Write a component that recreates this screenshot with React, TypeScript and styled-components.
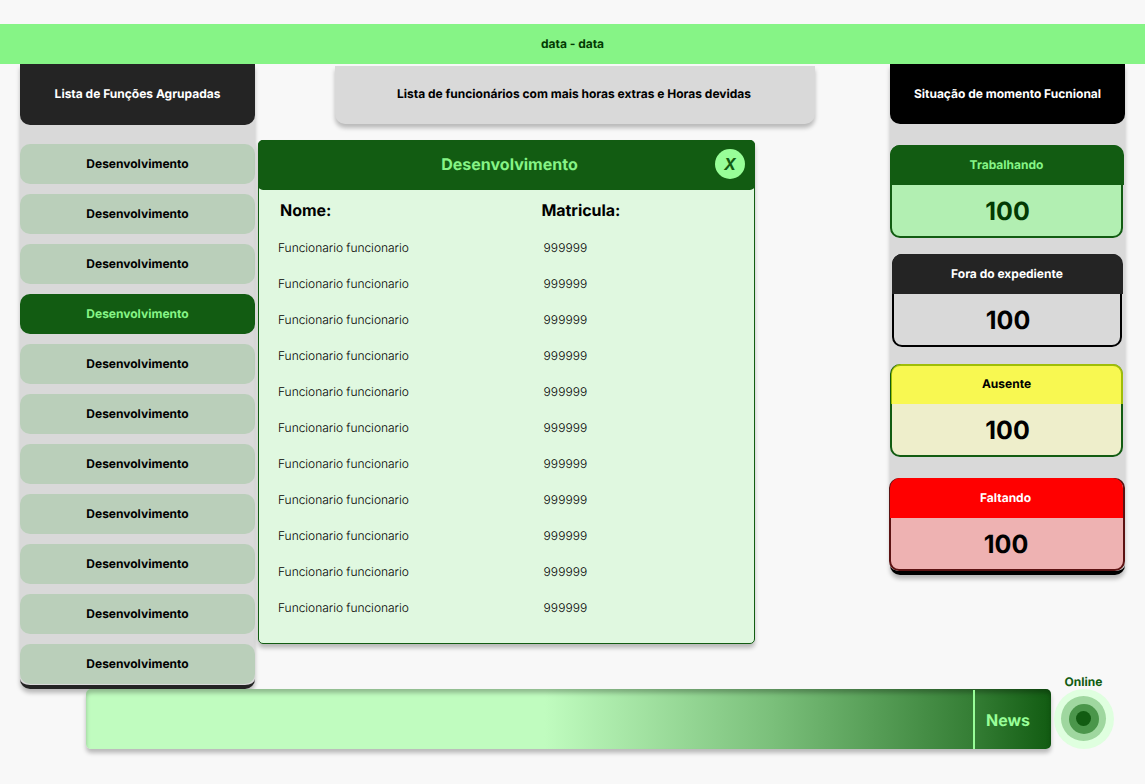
import React from "react";
import styled, { createGlobalStyle } from "styled-components";

const GlobalStyle = createGlobalStyle`
  * { box-sizing: border-box; }
  body { margin: 0; background: #f8f8f8; font-family: Inter, sans-serif; color: #000; text-rendering: geometricPrecision; }
`;

const Page = styled.div`
  width: 1145px;
  height: 784px;
  padding-top: 24px;
  overflow: hidden;
  background: #f8f8f8;
`;

const DateBar = styled.header`
  height: 40px;
  padding-bottom: 2px;
  display: flex;
  align-items: center;
  justify-content: center;
  background: #86f486;
  color: #033a03;
  font-size: 12px;
  font-weight: 700;
`;

const Main = styled.main`
  display: flex;
  height: 625px;
  padding: 0 20px;
`;

const Column = styled.aside<{ $edge: string }>`
  width: 235px;
  flex: none;
  align-self: flex-start;
  background: #d9d9d9;
  border-bottom: 4px solid ${(p) => p.$edge};
  border-radius: 0 0 10px 10px;
  box-shadow: 0 4px 4px rgba(0, 0, 0, 0.25);
`;

const ColumnTitle = styled.h2<{ $color: string; $height: number }>`
  margin: 0;
  height: ${(p) => p.$height}px;
  padding-bottom: ${(p) => p.$height - 59}px;
  display: flex;
  align-items: center;
  justify-content: center;
  background: ${(p) => p.$color};
  color: #fff;
  border-radius: 0 0 10px 10px;
  font-size: 12px;
  font-weight: 700;
`;

const RoleList = styled.div`
  display: flex;
  flex-direction: column;
  gap: 10px;
  padding: 19px 0 1px;
`;

const RoleButton = styled.button<{ $active: boolean }>`
  height: 40px;
  border: 0;
  padding: 0 0 2px;
  border-radius: 10px;
  background: ${(p) => (p.$active ? "#125c12" : "#bacfba")};
  color: ${(p) => (p.$active ? "#86f486" : "#000")};
  font: 700 12px Inter, sans-serif;
  text-rendering: inherit;
`;

const Center = styled.section`
  flex: 1;
  padding: 2px 0 0 3px;
`;

const OvertimeTitle = styled.h2`
  width: 480px;
  height: 58px;
  margin: 0 0 16px 77px;
  padding: 0 2px 3px 0;
  display: flex;
  align-items: center;
  justify-content: center;
  background: #d9d9d9;
  border-radius: 0 0 10px 10px;
  box-shadow: 0 4px 4px rgba(0, 0, 0, 0.25);
  font-size: 12px;
  font-weight: 700;
`;

const Dialog = styled.div`
  width: 497px;
  height: 504px;
  border: 1px solid #125c12;
  border-radius: 5px;
  background: #e0f8e0;
  box-shadow: 0 4px 4px rgba(0, 0, 0, 0.25);
`;

const DialogHeader = styled.div`
  height: 50px;
  margin: -1px -1px 0;
  padding: 0 10px 2px 40px;
  display: flex;
  align-items: center;
  background: #125c12;
  border-radius: 5px;
`;

const DialogTitle = styled.h3`
  flex: 1;
  margin: 0;
  padding-left: 6px;
  text-align: center;
  color: #86f486;
  font-size: 16px;
  font-weight: 700;
`;

const CloseButton = styled.button`
  width: 30px;
  height: 30px;
  padding: 0;
  border: 0;
  border-radius: 50%;
  background: #98fe98;
  color: #125c12;
  font: italic 700 16px/30px Inter, sans-serif;
`;

const TableHead = styled.div`
  display: grid;
  grid-template-columns: 261.5px 1fr;
  height: 40px;
  padding-left: 21px;
  align-items: center;
  font-size: 16px;
  font-weight: 700;
  letter-spacing: -0.06px;
`;

const TableRow = styled.div`
  display: grid;
  grid-template-columns: 265.5px 1fr;
  height: 36px;
  padding: 0 0 2px 19px;
  align-items: center;
  font-size: 12px;
  font-weight: 300;
`;

const EmployeeName = styled.span`
  letter-spacing: -0.04px;
`;

const EmployeeId = styled.span`
  letter-spacing: 0.1px;
`;

const StatusTrack = styled.div`
  padding-top: 21px;
`;

const StatusCard = styled.div<{ $width: number; $left: number; $gap: number; $edge: string; $fill: string; $ink: string }>`
  width: ${(p) => p.$width}px;
  height: 93px;
  margin: 0 0 ${(p) => p.$gap}px ${(p) => p.$left}px;
  border: 2px solid ${(p) => p.$edge};
  border-radius: 10px;
  background: ${(p) => p.$fill};
  color: ${(p) => p.$ink};
`;

const StatusLabel = styled.div<{ $fill: string; $ink: string; $left: number; $right: number; $nudge: number }>`
  height: 40px;
  margin: -2px ${(p) => p.$right}px 0 ${(p) => p.$left}px;
  padding: 0 ${(p) => p.$nudge}px 2px 0;
  display: flex;
  align-items: center;
  justify-content: center;
  border-radius: 10px 10px 0 0;
  background: ${(p) => p.$fill};
  color: ${(p) => p.$ink};
  font-size: 12px;
  font-weight: 700;
`;

const StatusCount = styled.div<{ $indent: number }>`
  height: 53px;
  display: flex;
  align-items: center;
  justify-content: center;
  padding: 1px 2px 0 ${(p) => p.$indent}px;
  font-size: 25px;
  font-weight: 700;
`;

const Footer = styled.footer`
  display: flex;
  align-items: flex-end;
  gap: 3px;
  height: 77px;
  margin-top: -17px;
  padding-left: 86px;
`;

const NewsBar = styled.div`
  width: 965px;
  height: 60px;
  padding-top: 1px;
  display: flex;
  justify-content: flex-end;
  border-radius: 5px;
  background: linear-gradient(90deg, #c0fcbf 0%, #c0fcbf 47.5%, #7bc07b 71%, #347d34 92%, #125c12 100%);
  box-shadow: 0 4px 4px rgba(0, 0, 0, 0.25), inset 0 4px 4px rgba(0, 0, 0, 0.25);
`;

const NewsLabel = styled.div`
  width: 78px;
  padding: 1px 0 0 11px;
  display: flex;
  align-items: center;
  border-left: 2px solid #98fe98;
  color: #98fe98;
  font-size: 16px;
  font-weight: 700;
`;

const Online = styled.div`
  width: 60px;
  display: flex;
  flex-direction: column;
  align-items: center;
  color: #125c12;
  font-size: 12px;
  line-height: 15px;
  font-weight: 700;
`;

const OnlineLabel = styled.span`
  padding-right: 1px;
`;

const Beacon = styled.svg`
  display: block;
`;

const roles = Array.from({ length: 11 }, () => "Desenvolvimento");
const employees = Array.from({ length: 11 }, () => ({ name: "Funcionario funcionario", id: "999999" }));

const statuses = [
  { label: "Trabalhando", width: 233, left: 0, gap: 16, edge: "#125c12", fill: "#b2efb2", ink: "#033a03", head: "#125c12", headInk: "#86f486", hl: -2, hr: -3, labelNudge: 1, countIndent: 4 },
  { label: "Fora do expediente", width: 230, left: 2, gap: 17, edge: "#000", fill: "#d9d9d9", ink: "#000", head: "#242424", headInk: "#fff", hl: -2, hr: -3, labelNudge: 1, countIndent: 4 },
  { label: "Ausente", width: 233, left: 0, gap: 21, edge: "#125c12", fill: "#eeeecb", ink: "#000", head: "rgba(255, 255, 0, 0.6)", headInk: "#000", hl: -1, hr: -2, labelNudge: 1, countIndent: 4 },
  { label: "Faltando", width: 236, left: -1, gap: 0, edge: "#5c1212", fill: "#eeb2b2", ink: "#000", head: "#ff0000", headInk: "#fff", hl: -1, hr: 0, labelNudge: 2, countIndent: 0 },
];

export default function App() {
  return (
    <Page>
      <GlobalStyle />
      <DateBar>data - data</DateBar>
      <Main>
        <Column $edge="#242424">
          <ColumnTitle $color="#242424" $height={61}>Lista de Funções Agrupadas</ColumnTitle>
          <RoleList>
            {roles.map((role, i) => (
              <RoleButton key={i} $active={i === 3}>{role}</RoleButton>
            ))}
          </RoleList>
        </Column>
        <Center>
          <OvertimeTitle>Lista de funcionários com mais horas extras e Horas devidas</OvertimeTitle>
          <Dialog>
            <DialogHeader>
              <DialogTitle>Desenvolvimento</DialogTitle>
              <CloseButton>X</CloseButton>
            </DialogHeader>
            <TableHead>
              <span>Nome:</span>
              <span>Matricula:</span>
            </TableHead>
            {employees.map((e, i) => (
              <TableRow key={i}>
                <EmployeeName>{e.name}</EmployeeName>
                <EmployeeId>{e.id}</EmployeeId>
              </TableRow>
            ))}
          </Dialog>
        </Center>
        <Column $edge="#000">
          <ColumnTitle $color="#000" $height={60}>Situação de momento Fucnional</ColumnTitle>
          <StatusTrack>
            {statuses.map((s) => (
              <StatusCard key={s.label} $width={s.width} $left={s.left} $gap={s.gap} $edge={s.edge} $fill={s.fill} $ink={s.ink}>
                <StatusLabel $fill={s.head} $ink={s.headInk} $left={s.hl} $right={s.hr} $nudge={s.labelNudge}>{s.label}</StatusLabel>
                <StatusCount $indent={s.countIndent}>100</StatusCount>
              </StatusCard>
            ))}
          </StatusTrack>
        </Column>
      </Main>
      <Footer>
        <NewsBar>
          <NewsLabel>News</NewsLabel>
        </NewsBar>
        <Online>
          <OnlineLabel>Online</OnlineLabel>
          <Beacon width="60" height="60" viewBox="0 0 60 60">
            <circle cx="30" cy="30" r="30" fill="#dfffdf" />
            <circle cx="29.5" cy="29.5" r="22.5" fill="#9fd79f" />
            <circle cx="30" cy="30" r="15" fill="#4b964b" />
            <circle cx="29.5" cy="29.5" r="7.5" fill="#125c12" />
          </Beacon>
        </Online>
      </Footer>
    </Page>
  );
}
